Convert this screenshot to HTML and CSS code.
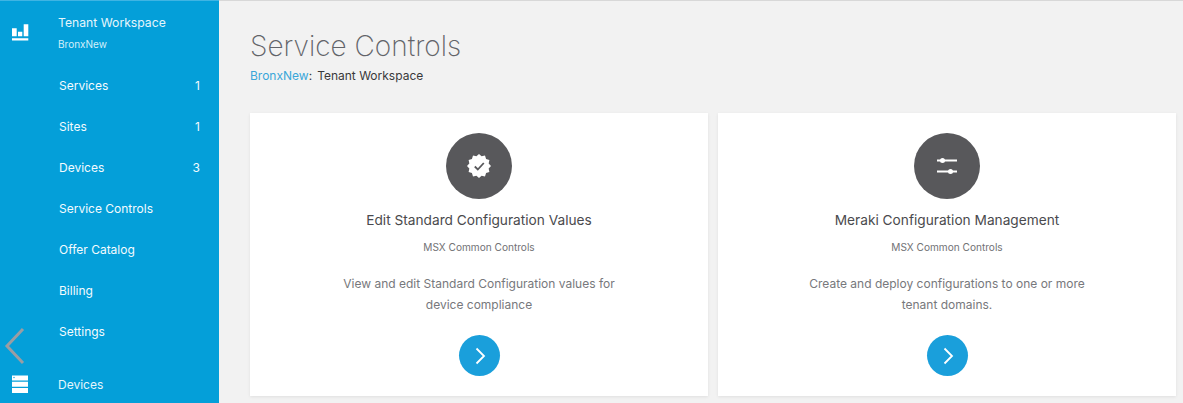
FILE: index.html
```html
<!DOCTYPE html>
<html lang="en">
<head>
<meta charset="utf-8">
<title>Service Controls</title>
<link rel="stylesheet" href="styles.css">
</head>
<body>
<div class="app">
  <aside class="sidebar">
    <div class="workspace">
      <svg class="side-icon" width="18" height="18" viewBox="0 0 18 18" fill="#fff"><path d="M1 4.300h4.700v8H1zM7 7.700h4.300v4.600H7zM12.700.3h4.600v12h-4.600zM1 14.300h16.300v2.200H1z"/></svg>
      <div class="workspace-text">
        <div class="workspace-title">Tenant Workspace</div>
        <div class="workspace-sub">BronxNew</div>
      </div>
    </div>
    <nav class="nav">
      <a class="nav-item"><span>Services</span><span class="count">1</span></a>
      <a class="nav-item"><span>Sites</span><span class="count">1</span></a>
      <a class="nav-item"><span>Devices</span><span class="count">3</span></a>
      <a class="nav-item"><span>Service Controls</span></a>
      <a class="nav-item"><span>Offer Catalog</span></a>
      <a class="nav-item"><span>Billing</span></a>
      <a class="nav-item"><span>Settings</span></a>
    </nav>
    <div class="side-footer">
      <svg class="side-icon" width="18" height="18" viewBox="0 0 18 18" fill="#fff"><path d="M1 .5h16v5H1zM1 6.700h16v5H1zM1 12.900h16v5H1z"/><circle cx="3" cy="2.500" r=".7" fill="#049fd9"/></svg>
      <span class="footer-label">Devices</span>
    </div>
    <svg class="collapse" width="22" height="38" viewBox="0 0 22 38" fill="none" stroke="#9a9da3" stroke-width="3"><path d="M20 2 4 19l16 17"/></svg>
  </aside>
  <main class="main">
    <h1 class="title">Service Controls</h1>
    <div class="crumbs"><a class="crumb-link">BronxNew</a>:<span class="crumb-current">Tenant Workspace</span></div>
    <section class="cards">
      <article class="card">
        <div class="badge">
          <svg width="26" height="26" viewBox="0 0 26 26"><path fill="#fff" d="M13 1 15.590 3.340 19 2.610 20.070 5.930 23.390 7 22.660 10.410 25 13 22.660 15.590 23.390 19 20.070 20.070 19 23.390 15.590 22.660 13 25 10.410 22.660 7 23.390 5.930 20.070 2.610 19 3.340 15.590 1 13 3.340 10.410 2.610 7 5.930 5.930 7 2.610 10.410 3.340z"/><path d="M8.800 13.500l3 3 6-6.500" fill="none" stroke="#58585b" stroke-width="1.800"/></svg>
        </div>
        <h2 class="card-title">Edit Standard Configuration Values</h2>
        <div class="card-sub">MSX Common Controls</div>
        <p class="card-desc">View and edit Standard Configuration values for<br>device compliance</p>
        <button class="go"><svg width="14" height="18" viewBox="0 0 14 18" fill="none" stroke="#fff" stroke-width="1.800"><path d="M4.500 1.500 12 9 4.500 16.500"/></svg></button>
      </article>
      <article class="card">
        <div class="badge">
          <svg width="24" height="20" viewBox="0 0 24 20" stroke="#fff" stroke-width="1.800" fill="#fff"><path d="M2 4.500h20M2 15.500h20"/><circle cx="7.500" cy="4.500" r="2.500" stroke="none"/><circle cx="15.500" cy="15.500" r="2.500" stroke="none"/></svg>
        </div>
        <h2 class="card-title">Meraki Configuration Management</h2>
        <div class="card-sub">MSX Common Controls</div>
        <p class="card-desc">Create and deploy configurations to one or more<br>tenant domains.</p>
        <button class="go"><svg width="14" height="18" viewBox="0 0 14 18" fill="none" stroke="#fff" stroke-width="1.800"><path d="M4.500 1.500 12 9 4.500 16.500"/></svg></button>
      </article>
    </section>
  </main>
</div>
</body>
</html>
```
FILE: styles.css
```css
* { box-sizing: border-box; }
html, body { margin: 0; height: 100%; overflow: hidden; }
body { font-family: "Inter", "Liberation Sans", sans-serif; color: #39393b; background: #f2f2f2; }
.app { display: flex; height: 403px; }
.sidebar {
  position: relative;
  width: 219px;
  flex: none;
  background: #049fd9;
  border-top: 1px solid #3fb4e3;
  color: #fff;
  display: flex;
  flex-direction: column;
}
.workspace { display: flex; padding: 14px 0 0 11px; height: 64px; }
.side-icon { flex: none; display: block; }
.workspace .side-icon { margin-top: 9px; }
.workspace-text { margin-left: 29px; }
.workspace-title { font-size: 12.200px; line-height: 16px; color: #e6f6fc; }
.workspace-sub { font-size: 10px; line-height: 14px; margin-top: 6px; color: #d3eff9; }
.nav { display: flex; flex-direction: column; padding: 0 19px 0 59px; }
.nav-item { display: flex; justify-content: space-between; height: 41px; line-height: 41px; font-size: 12px; color: #f4fbfe; }
.side-footer { display: flex; align-items: center; margin-top: auto; padding: 0 0 10px 11px; height: 28px; }
.footer-label { margin-left: 29px; font-size: 12px; color: #e6f6fc; }
.collapse { position: absolute; left: 3px; top: 326px; }
.main { flex: 1; min-width: 0; padding: 29px 7px 0 31px; border-top: 1px solid #d8d8d8; }
.title { margin: 0; font-size: 28px; line-height: 32px; font-weight: 200; color: #626469; }
.crumbs { margin-top: 6px; font-size: 12px; line-height: 16px; color: #39393b; }
.crumb-link { color: #3aa7d9; }
.crumb-current { margin-left: 5px; }
.cards { display: flex; gap: 10px; margin-top: 29px; }
.card {
  flex: 1 1 0;
  height: 283px;
  background: #fff;
  box-shadow: 0 1px 3px rgba(0, 0, 0, .08);
  display: flex;
  flex-direction: column;
  align-items: center;
  padding-top: 20px;
  text-align: center;
}
.badge { width: 66px; height: 66px; border-radius: 50%; background: #58585b; display: flex; align-items: center; justify-content: center; }
.card-title { margin: 11px 0 0; font-size: 13.700px; line-height: 20px; font-weight: 400; color: #4a4a4d; }
.card-sub { margin-top: 10px; font-size: 10.100px; line-height: 14px; color: #727276; }
.card-desc { margin: 19px 0 0; font-size: 12px; line-height: 21px; color: #77787c; }
.go { margin-top: 20px; width: 41px; height: 41px; border: 0; padding: 0; border-radius: 50%; background: #1a9fdb; display: flex; align-items: center; justify-content: center; }
```
